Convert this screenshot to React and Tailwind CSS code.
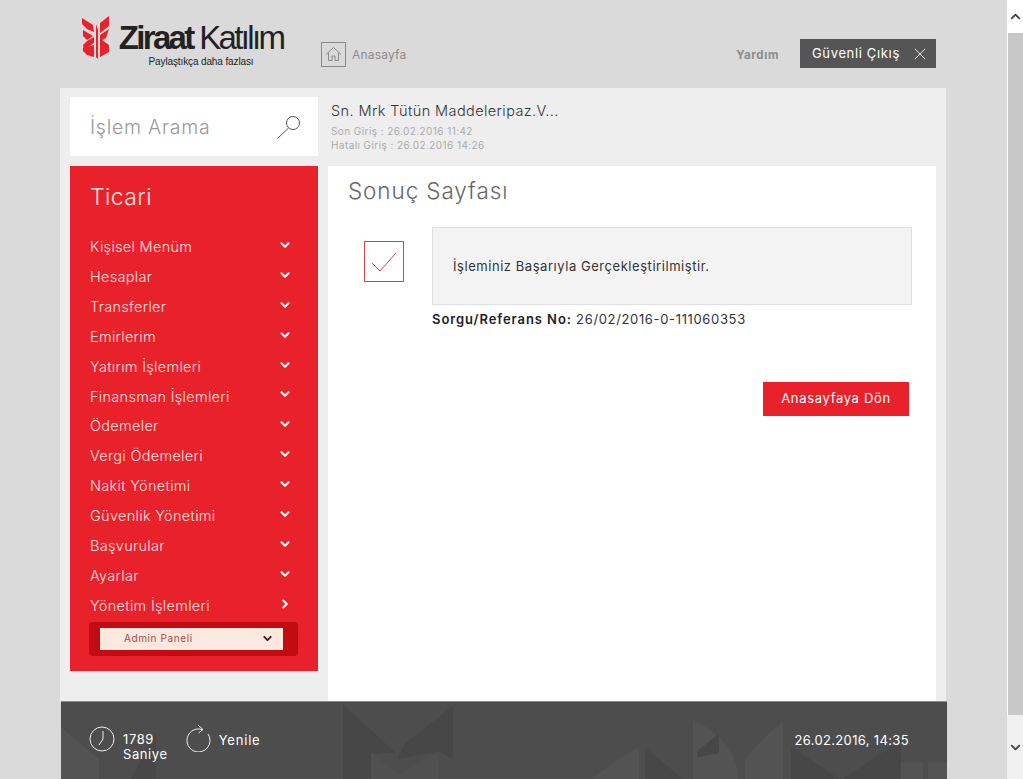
import { ChevronDown, ChevronRight, X } from 'lucide-react'

const MENU = [
  'Kişisel Menüm',
  'Hesaplar',
  'Transferler',
  'Emirlerim',
  'Yatırım İşlemleri',
  'Finansman İşlemleri',
  'Ödemeler',
  'Vergi Ödemeleri',
  'Nakit Yönetimi',
  'Güvenlik Yönetimi',
  'Başvurular',
  'Ayarlar',
]

function LogoMark() {
  return (
    <svg width="28" height="44" viewBox="0 0 28 44" className="shrink-0">
      <g fill="#e8212a">
        <path d="M0 2 L11 9 L12 16 L5 13 L0 8 Z" />
        <path d="M1 14 L11 20 L5 24 L1 20 Z" />
        <path d="M5 25 L12 21 L12 27 L2 34 L1 29 Z" />
        <path d="M1 32 L12 29 L12 41 L5 39 L1 35 Z" />
        <path d="M14 8 L16 14 L16 43 L14 41 Z" />
        <path d="M18 7 L27 0 L27 10 L18 17 Z" />
        <path d="M18 19 L27 13 L24 22 L20 24 L27 29 L27 36 L18 41 Z" />
      </g>
    </svg>
  )
}

function MenuItem({ label, open = true }) {
  return (
    <div className="flex h-[29.9px] items-center justify-between pl-5 pr-[26px] text-[14.5px] font-light text-[#fde3e0]">
      <span className="tracking-[0.3px]">{label}</span>
      {open ? (
        <ChevronDown size={14} strokeWidth={3.5} className="-mt-1 text-white" />
      ) : (
        <ChevronRight size={14} strokeWidth={3.5} className="-mt-1 text-white" />
      )}
    </div>
  )
}

// faint leaf pattern behind the footer
function FooterArt() {
  return (
    <svg className="absolute inset-0 h-full w-full" viewBox="0 0 886 78" preserveAspectRatio="none">
      <g fill="#535353">
        <path d="M0 25 L38 58 L38 78 L0 78 Z" />
        <path d="M530 78 L572 48 L578 46 L578 78 Z" />
        <path d="M632 78 L632 18 C660 32 677 52 677 78 Z" />
        <path d="M684 78 L684 58 C698 42 708 30 722 20 L722 78 Z" />
        <path d="M840 61 L862 61 L862 78 L840 78 Z" />
        <path d="M867 61 L886 61 L886 78 L867 78 Z" />
        <path d="M330 78 L378 50 L378 78 Z" fill="#505050" />
        <path d="M310 52 L345 78 L310 78 Z" fill="#505050" />
      </g>
      <g fill="#474747">
        <path d="M282 2 L335 52 L312 52 L282 50 Z" />
        <path d="M282 50 L310 50 L310 78 L282 78 Z" />
        <path d="M336 58 L344 42 L392 4 L392 58 L378 50 Z" />
        <path d="M584 46 L622 78 L584 78 Z" />
        <path d="M730 45 L778 78 L730 78 Z" />
        <path d="M782 78 L840 38 L840 78 Z" />
        <path d="M636 50 L658 32 L658 52 L636 56 Z" />
        <path d="M95 30 L95 78 L70 78 Z" />
      </g>
    </svg>
  )
}

function Scrollbar() {
  return (
    <div className="flex h-full w-4 shrink-0 flex-col bg-white">
      <div className="flex h-[33px] items-center justify-center">
        <ChevronDown size={15} strokeWidth={3} className="rotate-180 text-[#444]" />
      </div>
      <div className="ml-px h-[682px] bg-[#c8c8c8]" />
      <div className="flex flex-1 items-center justify-center bg-[#f1f1f1]">
        <ChevronDown size={15} strokeWidth={3} className="text-[#444]" />
      </div>
    </div>
  )
}

export default function App() {
  return (
    <div className="flex h-[779px] w-full overflow-hidden bg-[#dadada] font-['Inter','Noto_Sans',sans-serif]">
      <div className="flex min-w-0 flex-1 flex-col">
        {/* Header */}
        <header className="flex h-[88px] shrink-0">
          <div className="ml-[82px] mt-[16px] flex w-[239px] shrink-0 items-start">
            <LogoMark />
            <div className="ml-[8px] flex w-[166px] flex-col items-center">
              <span className="whitespace-nowrap font-['Liberation_Sans',sans-serif] text-[33px] leading-[44px] tracking-[-2.65px] text-[#222]">
                <b>Ziraat</b> Katılım
              </span>
              <span className="-mt-[4px] whitespace-nowrap font-['Liberation_Sans',sans-serif] text-[10px] leading-[12px] tracking-[-0.12px] text-[#222]">
                Paylaştıkça daha fazlası
              </span>
            </div>
          </div>
          <div className="mt-[42px] flex h-6 items-center">
            <div className="flex h-[25px] w-[25px] items-center justify-center border border-[#8a8a8a]">
              <svg width="17" height="16" viewBox="0 0 17 16" fill="none" stroke="#888" strokeWidth="1">
                <path d="M1 8.5 L8.5 1.5 L16 8.5" />
                <path d="M3.5 7 L3.5 14.5 L7 14.5 L7 10 L10 10 L10 14.5 L13.5 14.5 L13.5 7" />
              </svg>
            </div>
            <span className="ml-[6px] pt-[2px] text-[12px] tracking-[0.2px] text-[#8c8c8c]">Anasayfa</span>
          </div>
          <div className="mt-[39px] ml-auto mr-[71px] flex h-[29px] items-center">
            <span className="mr-[21px] pt-[4px] text-[11.5px] font-bold tracking-[0.6px] text-[#8c8c8c]">Yardım</span>
            <div className="flex h-full w-[136px] items-center justify-between bg-[#555] pl-3 pr-[6px] text-[13px] tracking-[0.65px] text-white">
              Güvenli Çıkış
              <X size={20} strokeWidth={1} />
            </div>
          </div>
        </header>

        {/* Body */}
        <div className="ml-[60px] flex h-[613px] w-[886px] shrink-0 gap-[10px] bg-[#eeeeee] pl-[10px] pr-[10px] pt-[9px]">
          <aside className="w-[248px] shrink-0">
            <div className="flex h-[59px] items-center justify-between bg-white pl-5 pr-[16px]">
              <span className="pt-[2px] text-[19.5px] font-light tracking-[0.75px] text-[#999]">İşlem Arama</span>
              <svg width="26" height="26" viewBox="0 0 26 26" fill="none" stroke="#555" strokeWidth="1">
                <circle cx="17" cy="9" r="6.5" />
                <path d="M12.5 14 L1.5 24.5" />
              </svg>
            </div>
            <nav className="mt-[10px] h-[505px] bg-[#e8212a]">
              <div className="pl-5 pt-[14px] text-[23px] font-light leading-[34px] tracking-[0.4px] text-[#fde3e0]">Ticari</div>
              <div className="mt-[18px]">
                {MENU.map((label) => (
                  <MenuItem key={label} label={label} />
                ))}
                <MenuItem label="Yönetim İşlemleri" open={false} />
              </div>
              <div className="ml-[19px] mt-[1px] flex h-[34px] w-[209px] items-center rounded-sm bg-[#c20c14] pl-[11px]">
                <div className="flex h-[22px] w-[183px] items-center justify-between bg-[#fbe9df] pl-6 pr-[9px] text-[10px] tracking-[0.6px] text-[#a8474a]">
                  Admin Paneli
                  <ChevronDown size={13} strokeWidth={3.5} className="text-[#4a1a10]" />
                </div>
              </div>
            </nav>
          </aside>

          <div className="flex min-w-0 flex-1 flex-col">
            <div className="h-[69px] shrink-0 pl-[3px] pt-[4px]">
              <div className="text-[14.5px] font-light leading-[20px] tracking-[0.4px] text-[#333]">Sn. Mrk Tütün Maddeleripaz.V...</div>
              <div className="mt-[3px] text-[10px] leading-[14px] tracking-[0.42px] text-[#aaaaaa]">Son Giriş : 26.02.2016 11:42</div>
              <div className="text-[10px] leading-[14px] tracking-[0.42px] text-[#aaaaaa]">Hatalı Giriş : 26.02.2016 14:26</div>
            </div>
            <main className="flex-1 bg-white pl-5 pr-6">
              <h1 className="pt-[10px] text-[22.5px] font-light leading-[30px] tracking-[0.9px] text-[#666]">Sonuç Sayfası</h1>
              <div className="mt-[21px] flex">
                <div className="ml-4 mt-[14px] flex h-[41px] w-10 shrink-0 items-center justify-center border border-[#d8404c]">
                  <svg width="30" height="24" viewBox="0 0 30 24" fill="none" stroke="#d8404c" strokeWidth="1">
                    <path d="M3 13 L11 21 L27 3" />
                  </svg>
                </div>
                <div className="ml-[28px] flex-1">
                  <div className="flex h-[78px] items-center border border-[#e0e0e0] bg-[#f3f3f3] pl-5 pt-[2px] text-[13px] tracking-[0.55px] text-[#333]">
                    İşleminiz Başarıyla Gerçekleştirilmiştir.
                  </div>
                  <div className="mt-[4px] text-[13px] leading-[20px] tracking-[0.65px] text-[#333]">
                    <b className="font-semibold tracking-[0.93px] text-[#222]">Sorgu/Referans No:</b> 26/02/2016-0-111060353
                  </div>
                </div>
              </div>
              <div className="mt-[53px] flex justify-end pr-[3px]">
                <div className="flex h-[34px] w-[146px] items-center justify-center bg-[#e8212a] text-[13px] tracking-[0.67px] text-white">
                  Anasayfaya Dön
                </div>
              </div>
            </main>
          </div>
        </div>

        {/* Footer */}
        <footer className="relative ml-[61px] h-[78px] w-[886px] shrink-0 overflow-hidden border-t border-[#8a8a8a] bg-[#4d4d4d] text-[13px] tracking-[0.6px] text-white">
          <FooterArt />
          <div className="relative flex h-full items-start pl-7 pr-[38px] pt-[24px]">
            <svg width="26" height="26" viewBox="0 0 26 26" fill="none" stroke="#eee" strokeWidth="1">
              <circle cx="13" cy="13" r="12" />
              <path d="M14 5 L14 13 L10 19" />
            </svg>
            <div className="ml-[8px] mt-[6px] leading-[15px]">
              <div>1789</div>
              <div>Saniye</div>
            </div>
            <svg className="ml-[17px] -mt-[2px]" width="26" height="28" viewBox="0 0 26 28" fill="none" stroke="#eee" strokeWidth="1">
              <path d="M17 5.5 A11.5 11.5 0 1 0 23 10" />
              <path d="M13 1 L18 5.5 L13.5 9" />
            </svg>
            <div className="ml-[8px] mt-[7px] leading-[15px] tracking-[0.8px]">Yenile</div>
            <div className="ml-auto mt-[7px] leading-[15px] tracking-[0.35px]">26.02.2016, 14:35</div>
          </div>
        </footer>
      </div>
      <Scrollbar />
    </div>
  )
}
